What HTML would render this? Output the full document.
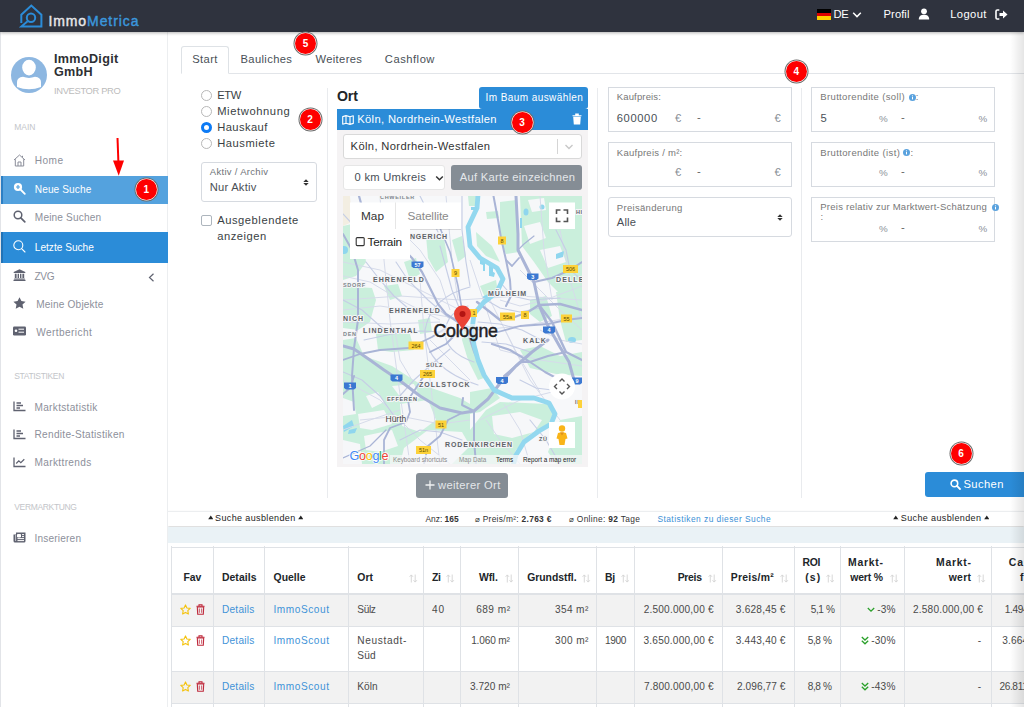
<!DOCTYPE html>
<html lang="de">
<head>
<meta charset="utf-8">
<title>ImmoMetrica</title>
<style>
*{box-sizing:border-box;margin:0;padding:0}
html,body{width:1024px;height:707px;overflow:hidden;background:#fff}
body{font-family:"Liberation Sans",sans-serif;color:#212529;font-size:12px;position:relative}
.abs{position:absolute}
.t{position:absolute;white-space:nowrap;line-height:1}
#nav{position:absolute;left:0;top:0;width:1024px;height:32px;background:#2f333e;box-shadow:0 1px 3px rgba(0,0,0,.3);z-index:5}
#side{position:absolute;left:0;top:0;width:168px;height:707px;background:#fff;border-left:1px solid #e2e4e8;border-right:1px solid #eceef0;z-index:3}
#pg{position:absolute;left:0;top:0;width:1024px;height:707px;z-index:2;overflow:hidden}
.vdiv{position:absolute;width:1px;background:#e9ebee}
.box{position:absolute;border:1px solid #d6dae0;background:#fff}
.radio{position:absolute;width:11px;height:11px;border-radius:50%;border:1px solid #b8b8b8;background:#fff}
.btn{position:absolute;border-radius:3px}
.ann{position:absolute;width:21px;height:21px;border-radius:50%;background:#fe0000;box-shadow:0 0 0 .5px #fff,0 0 0 1.5px #6a6a6a;color:#fff;font-weight:bold;font-size:10px;text-align:center;line-height:22.5px;z-index:20}
</style>
</head>
<body>
<div id="nav">
<svg class="abs" style="left:19px;top:4px" width="25" height="25" viewBox="0 0 25 25"><path d="M2.3 19 V10.8 L12.3 1.6 L22.4 10.8 V22.6 H2.3 L8.6 17.3" fill="none" stroke="#2b8cd8" stroke-width="2" stroke-linejoin="miter"/><circle cx="12" cy="13.8" r="4.2" fill="#2f333e" stroke="#2b8cd8" stroke-width="2"/></svg>
<div class="t" style="left:48.4px;top:14px;font-size:14px;color:#fff;letter-spacing:0.92px;-webkit-text-stroke:.4px"><span style="color:#e8e8ea">Immo</span><span style="color:#3b97dc">Metrica</span></div>
<div class="abs" style="left:817px;top:9px;width:14px;height:11px;background:linear-gradient(#000 0 33%,#d00 33% 66%,#ffce00 66%)"></div>
<div class="t" style="left:833.6px;top:9px;font-size:11.2px;color:#fff;letter-spacing:-0.35px;">DE</div>
<svg class="abs" style="left:852px;top:11px" width="10" height="8" viewBox="0 0 10 8"><path d="M1.2 1.8 L5 5.6 L8.8 1.8" fill="none" stroke="#fff" stroke-width="1.5"/></svg>
<div class="t" style="left:883.6px;top:9px;font-size:11.2px;color:#fff;letter-spacing:0.06px;">Profil</div>
<svg class="abs" style="left:918px;top:8px" width="12" height="13" viewBox="0 0 12 13"><circle cx="6" cy="3.3" r="2.9" fill="#fff"/><path d="M0.8 11.5 C0.8 8 3 6.8 6 6.8 S11.2 8 11.2 11.5 Z" fill="#fff"/></svg>
<div class="t" style="left:950.2px;top:9px;font-size:11.2px;color:#fff;letter-spacing:0.41px;">Logout</div>
<svg class="abs" style="left:995px;top:9px" width="13" height="11" viewBox="0 0 13 11"><path d="M4.3 1 H2.3 Q1 1 1 2.3 V8.7 Q1 10 2.3 10 H4.3" fill="none" stroke="#fff" stroke-width="1.6"/><path d="M4.5 4 H8 V1.4 L12.5 5.5 L8 9.6 V7 H4.5 Z" fill="#fff"/></svg>
</div>
<div id="side">
<div class="abs" style="left:-1px;top:0;width:168px;height:707px">
<svg class="abs" style="left:11px;top:57px" width="36" height="36" viewBox="0 0 36 36"><defs><clipPath id="av"><circle cx="18" cy="18" r="18"/></clipPath></defs><circle cx="18" cy="18" r="18" fill="#8db7e1"/><g clip-path="url(#av)" fill="#fff"><ellipse cx="18" cy="10.6" rx="6.8" ry="7.8"/><path d="M6 30 V25 Q6 20.5 12 19.8 Q18 22 24 19.8 Q30 20.5 30 25 V30 Q18 34.5 6 30 Z"/></g></svg>
<div class="t" style="left:54px;top:53px;font-size:12.6px;color:#2d2f33;letter-spacing:0.33px;font-weight:bold;">ImmoDigit</div>
<div class="t" style="left:54px;top:66px;font-size:12.6px;color:#2d2f33;letter-spacing:0.24px;font-weight:bold;">GmbH</div>
<div class="t" style="left:54px;top:86px;font-size:9.4px;color:#bcbcbc;letter-spacing:-0.35px;">INVESTOR PRO</div>
<div class="t" style="left:14.3px;top:123px;font-size:8.5px;color:#c3c5c9;letter-spacing:-0.05px;">MAIN</div>
<div class="abs" style="left:1px;top:176px;width:166.5px;height:27.5px;background:#54a2de;border-left:2px solid #2c7fc4"></div>
<div class="abs" style="left:1px;top:232px;width:166.5px;height:30.5px;background:#2b8cd8;border-left:2px solid #2273b6"></div>
<div class="t" style="left:34.8px;top:156px;font-size:10.1px;color:#8d909b;letter-spacing:0.46px;">Home</div>
<div class="t" style="left:34.8px;top:185px;font-size:10.1px;color:#fff;letter-spacing:0.1px;">Neue Suche</div>
<div class="t" style="left:34.8px;top:213px;font-size:10.1px;color:#8d909b;letter-spacing:0.17px;">Meine Suchen</div>
<div class="t" style="left:34.8px;top:243px;font-size:10.1px;color:#fff;letter-spacing:0.01px;">Letzte Suche</div>
<div class="t" style="left:34.5px;top:272px;font-size:10.1px;color:#8d909b;letter-spacing:-0.35px;">ZVG</div>
<div class="t" style="left:36.2px;top:300px;font-size:10.1px;color:#8d909b;letter-spacing:0.18px;">Meine Objekte</div>
<div class="t" style="left:36.2px;top:328px;font-size:10.1px;color:#8d909b;letter-spacing:0.42px;">Wertbericht</div>
<div class="t" style="left:34.5px;top:403px;font-size:10.1px;color:#8d909b;letter-spacing:0.3px;">Marktstatistik</div>
<div class="t" style="left:34.5px;top:430px;font-size:10.1px;color:#8d909b;letter-spacing:0.29px;">Rendite-Statistiken</div>
<div class="t" style="left:34.5px;top:458px;font-size:10.1px;color:#8d909b;letter-spacing:0.35px;">Markttrends</div>
<div class="t" style="left:34.5px;top:534px;font-size:10.1px;color:#8d909b;letter-spacing:0.18px;">Inserieren</div>
<div class="t" style="left:14.3px;top:372px;font-size:8.5px;color:#c3c5c9;letter-spacing:-0.35px;">STATISTIKEN</div>
<div class="t" style="left:14.3px;top:503px;font-size:8.5px;color:#c3c5c9;letter-spacing:-0.35px;">VERMARKTUNG</div>
<svg class="abs" style="left:13px;top:154px" width="13" height="13" viewBox="0 0 13 13"><path d="M1 6 L6.5 1 L12 6 M2.3 5.2 V12 H10.7 V5.2 M5 12 V8 H8 V12 M9.5 1.8 V3.4" fill="none" stroke="#8a8d99" stroke-width="1"/></svg>
<svg class="abs" style="left:13px;top:182px" width="13" height="13" viewBox="0 0 13 13"><circle cx="5" cy="5" r="4.1" fill="#fff"/><path d="M8 8 L11.8 11.8" stroke="#fff" stroke-width="1.8" stroke-linecap="round"/><path d="M5 3 V7 M3 5 H7" stroke="#54a2de" stroke-width="1.2"/></svg>
<svg class="abs" style="left:13px;top:209.5px" width="13" height="13" viewBox="0 0 13 13"><circle cx="5" cy="5" r="3.8" fill="none" stroke="#5f6270" stroke-width="1.5"/><path d="M7.8 7.8 L11.8 11.8" stroke="#5f6270" stroke-width="1.7" stroke-linecap="round"/></svg>
<svg class="abs" style="left:13px;top:240px" width="13" height="13" viewBox="0 0 13 13"><circle cx="5.3" cy="5.3" r="4.5" fill="none" stroke="#fff" stroke-width="1.1"/><path d="M8.6 8.6 L12 12" stroke="#fff" stroke-width="1.1" stroke-linecap="round"/></svg>
<svg class="abs" style="left:13px;top:269.3px" width="13" height="12" viewBox="0 0 13 12"><path d="M6.5 0.3 L12.3 3 V4 H0.7 V3 Z M1.8 4.8 H3.6 V9 H1.8 Z M4.6 4.8 H6 V9 H4.6 Z M7 4.8 H8.4 V9 H7 Z M9.4 4.8 H11.2 V9 H9.4 Z M1.2 9.4 H11.8 V10.4 H1.2 Z M0.5 10.8 H12.5 V12 H0.5 Z" fill="#5f6270"/></svg>
<svg class="abs" style="left:147.5px;top:272.5px" width="7" height="9" viewBox="0 0 7 9"><path d="M5.5 0.8 L1.5 4.5 L5.5 8.2" fill="none" stroke="#5f6270" stroke-width="1.2"/></svg>
<svg class="abs" style="left:13px;top:296.5px" width="13" height="12" viewBox="0 0 13 12"><path d="M6.5 0.3 L8.4 4.1 L12.6 4.7 L9.5 7.6 L10.3 11.8 L6.5 9.8 L2.7 11.8 L3.5 7.6 L0.4 4.7 L4.6 4.1 Z" fill="#5f6270"/></svg>
<svg class="abs" style="left:13px;top:325.5px" width="13" height="10" viewBox="0 0 13 10"><rect x="0" y="0.5" width="13" height="9" rx="1.2" fill="#5f6270"/><path d="M5.5 3.2 H11 M5.5 6.2 H11" stroke="#fff" stroke-width="1"/><circle cx="3" cy="4.8" r="1.3" fill="#fff"/></svg>
<svg class="abs" style="left:13px;top:401px" width="13" height="11" viewBox="0 0 13 11"><path d="M1 0.5 V9.5 H12.5" fill="none" stroke="#5f6270" stroke-width="1.3"/><path d="M3.5 2 H8 M3.5 4.5 H10 M3.5 7 H7" stroke="#5f6270" stroke-width="1.4"/></svg>
<svg class="abs" style="left:13px;top:429px" width="13" height="11" viewBox="0 0 13 11"><path d="M1 0.5 V9.5 H12.5" fill="none" stroke="#5f6270" stroke-width="1.3"/><path d="M3.5 2 H8 M3.5 4.5 H10 M3.5 7 H7" stroke="#5f6270" stroke-width="1.4"/></svg>
<svg class="abs" style="left:13px;top:457px" width="13" height="11" viewBox="0 0 13 11"><path d="M1 0.5 V9.5 H12.5" fill="none" stroke="#5f6270" stroke-width="1.3"/><path d="M3.2 6.5 L5.8 3.8 L7.8 5.6 L11.3 2.2" fill="none" stroke="#5f6270" stroke-width="1.2"/></svg>
<svg class="abs" style="left:13px;top:531.5px" width="13" height="11" viewBox="0 0 13 11"><path d="M3 0.5 H12.5 V9 Q12.5 10.5 11 10.5 H2 Q0.5 10.5 0.5 9 V2.5 H3 Z" fill="#5f6270"/><path d="M4.5 2.5 H7.5 V5 H4.5 Z M9 2.6 H11 M9 4.6 H11 M4.5 6.6 H11 M4.5 8.6 H11" stroke="#fff" stroke-width="1" fill="#fff"/><path d="M2.6 3 V9" stroke="#fff" stroke-width=".6"/></svg>
</div>
</div>
<div id="pg">
<div class="abs" style="left:181px;top:73px;width:843px;height:1px;background:#e2e5e9"></div>
<div class="abs" style="left:181px;top:46px;width:48px;height:28px;border:1px solid #dee2e6;border-bottom:1px solid #fff;border-radius:3px 3px 0 0;background:#fff"></div>
<div class="t" style="left:192.2px;top:54px;font-size:11.2px;color:#495057;letter-spacing:0.41px;">Start</div>
<div class="t" style="left:240.5px;top:54px;font-size:11.2px;color:#495057;letter-spacing:0.36px;">Bauliches</div>
<div class="t" style="left:315.5px;top:54px;font-size:11.2px;color:#495057;letter-spacing:0.35px;">Weiteres</div>
<div class="t" style="left:384.8px;top:54px;font-size:11.2px;color:#495057;letter-spacing:0.52px;">Cashflow</div>
<div class="radio" style="left:201px;top:89.9px"></div>
<div class="t" style="left:217.2px;top:90px;font-size:11.2px;color:#3a3f44;letter-spacing:-0.35px;">ETW</div>
<div class="radio" style="left:201px;top:105.9px"></div>
<div class="t" style="left:217.2px;top:106px;font-size:11.2px;color:#3a3f44;letter-spacing:0.6px;">Mietwohnung</div>
<div class="radio" style="left:201px;top:122.1px;border:3.5px solid #0d7bf5"></div>
<div class="t" style="left:217.2px;top:122px;font-size:11.2px;color:#3a3f44;letter-spacing:0.41px;">Hauskauf</div>
<div class="radio" style="left:201px;top:138.1px"></div>
<div class="t" style="left:217.2px;top:138px;font-size:11.2px;color:#3a3f44;letter-spacing:0.54px;">Hausmiete</div>
<div class="box" style="left:201px;top:162px;width:116px;height:39.5px;border-radius:3px"></div>
<div class="t" style="left:209.8px;top:167px;font-size:9.5px;color:#6f7378;letter-spacing:0.3px;">Aktiv / Archiv</div>
<div class="t" style="left:209.8px;top:182px;font-size:11.2px;color:#4a4f55;letter-spacing:0.21px;">Nur Aktiv</div>
<svg class="abs" style="left:302.5px;top:179px" width="6" height="7" viewBox="0 0 6 7"><path d="M0.3 3 L3 0.2 L5.7 3 Z M0.3 4 L3 6.8 L5.7 4 Z" fill="#333"/></svg>
<div class="abs" style="left:201px;top:215px;width:11px;height:11px;border:1px solid #adb5bd;border-radius:2px;background:#fff"></div>
<div class="t" style="left:217.2px;top:215px;font-size:11.2px;color:#3a3f44;letter-spacing:0.54px;">Ausgeblendete</div>
<div class="t" style="left:217.2px;top:231px;font-size:11.2px;color:#3a3f44;letter-spacing:0.5px;">anzeigen</div>
<div class="vdiv" style="left:327px;top:88px;height:410px"></div>
<div class="t" style="left:336.9px;top:89px;font-size:14.1px;color:#212529;letter-spacing:-0.01px;font-weight:bold;">Ort</div>
<div class="btn" style="left:479px;top:87px;width:108.5px;height:21.5px;background:#2b8cd8"></div>
<div class="t" style="left:485.6px;top:93px;font-size:10px;color:#fff;letter-spacing:0.42px;">Im Baum auswählen</div>
<div class="abs" style="left:337px;top:109px;width:250.5px;height:21px;background:#2b8cd8"></div>
<svg class="abs" style="left:342px;top:114.5px" width="12" height="10" viewBox="0 0 12 10"><path d="M0.7 1.6 L4 0.6 L8 1.8 L11.3 0.8 V8.4 L8 9.4 L4 8.2 L0.7 9.2 Z M4 0.6 V8.2 M8 1.8 V9.4" fill="none" stroke="#fff" stroke-width="1.1" stroke-linejoin="round"/></svg>
<div class="t" style="left:357.2px;top:114px;font-size:11.2px;color:#fff;letter-spacing:0.35px;">Köln, Nordrhein-Westfalen</div>
<svg class="abs" style="left:572px;top:113px" width="10" height="12" viewBox="0 0 10 12"><path d="M0.5 2.2 H9.5 V3.2 H0.5 Z M3.2 0.5 H6.8 V2.2 H3.2 Z M1.2 3.8 H8.8 L8.2 11.5 H1.8 Z" fill="#fff"/></svg>
<div class="abs" style="left:337px;top:130px;width:250.5px;height:337px;background:#f5f3f4"></div>
<div class="box" style="left:343px;top:134px;width:239px;height:25px;border-radius:3px;border-color:#d9d9d9"></div>
<div class="t" style="left:350.6px;top:141px;font-size:11.2px;color:#333;letter-spacing:0.35px;">Köln, Nordrhein-Westfalen</div>
<div class="abs" style="left:556.5px;top:139px;width:1px;height:15px;background:#d5d5d5"></div>
<svg class="abs" style="left:564px;top:143px" width="10" height="8" viewBox="0 0 10 8"><path d="M1.5 2 L5 5.5 L8.5 2" fill="none" stroke="#c8c8c8" stroke-width="1.4"/></svg>
<div class="box" style="left:343px;top:165px;width:102px;height:25px;border-radius:3px;border-color:#e6e6e6"></div>
<div class="t" style="left:354.5px;top:172px;font-size:11.2px;color:#495057;letter-spacing:0.28px;">0 km Umkreis</div>
<svg class="abs" style="left:434.5px;top:174.5px" width="9" height="7" viewBox="0 0 9 7"><path d="M1.2 1.5 L4.5 4.8 L7.8 1.5" fill="none" stroke="#333" stroke-width="1.5"/></svg>
<div class="btn" style="left:450.7px;top:165px;width:131.3px;height:25px;background:#858d95"></div>
<div class="t" style="left:459.7px;top:172px;font-size:11.2px;color:#e4e7ea;letter-spacing:0.29px;">Auf Karte einzeichnen</div>
<svg id="mapsvg" class="abs" style="left:343px;top:196px" width="239" height="268" viewBox="343 196 239 268" font-family="Liberation Sans, sans-serif">
<rect x="343" y="196" width="239" height="268" fill="#f7f8fa"/>
<!-- green areas -->
<g fill="#caefdc">
<path d="M343 226 L352 224 L362 232 L366 262 L356 276 L343 280 Z"/>
<path d="M343 286 L372 288 L376 300 L370 322 L358 330 L343 328 Z"/>
<path d="M384 286 L398 284 L402 296 L390 300 Z"/>
<path d="M372 238 L392 230 L398 250 L380 256 Z"/>
<path d="M404 262 L416 258 L420 274 L410 280 Z"/>
<path d="M426 236 L444 238 L448 262 L436 272 L428 258 Z"/>
<path d="M452 240 L462 236 L466 256 L458 262 Z"/>
<path d="M468 196 L476 196 L476 206 L469 206 Z"/>
<path d="M486 212 L498 211 L499 218 L487 219 Z"/>
<path d="M500 202 L517 200 L519 252 L506 254 L500 240 Z"/>
<path d="M520 196 L582 196 L582 296 L566 300 L548 282 L534 262 L522 246 Z"/>
<path d="M476 232 L492 246 L500 262 L486 256 L477 246 Z"/>
<path d="M480 286 L496 280 L498 292 L486 300 Z"/>
<path d="M418 320 L430 318 L432 332 L420 334 Z"/>
<path d="M376 334 L410 334 L414 350 L392 352 L378 350 Z"/>
<path d="M343 340 L356 338 L364 356 L392 366 L420 384 L460 398 L470 404 L470 464 L343 464 Z"/>
<path d="M470 392 L492 388 L500 398 L480 412 L470 414 Z"/>
<path d="M500 402 L548 404 L553 414 L548 424 L530 434 L516 450 L510 464 L470 464 L470 430 L486 410 Z"/>
<path d="M520 350 L540 346 L560 356 L582 352 L582 376 L556 374 L530 368 Z"/>
<path d="M530 300 L546 296 L552 316 L540 322 L530 314 Z"/>
<path d="M556 292 L582 290 L582 340 L566 342 L560 320 Z"/>
<path d="M560 420 L582 416 L582 464 L556 464 L548 452 Z"/>
<path d="M464 326 L470 340 L476 360 L484 378 L478 380 L468 360 L462 340 Z"/>
</g>
<!-- white clearings inside green -->
<g fill="#f6f7f9">
<path d="M366 396 L378 392 L384 402 L372 408 Z"/>
<path d="M358 414 L384 410 L392 424 L372 430 L360 428 Z"/>
<path d="M364 436 L392 430 L398 446 L380 452 L366 450 Z"/>
<path d="M392 386 L414 384 L420 398 L404 402 Z"/>
<path d="M400 404 L428 400 L436 420 L420 432 L402 426 Z"/>
<path d="M343 398 L354 402 L356 414 L343 416 Z"/>
<path d="M343 440 L360 444 L362 464 L343 464 Z"/>
<path d="M428 430 L462 432 L470 446 L452 464 L400 464 L404 448 Z"/>
<path d="M492 416 L520 412 L542 420 L534 432 L512 438 L494 434 Z"/>
<path d="M524 226 L540 222 L546 238 L530 244 Z"/>
<path d="M540 250 L560 246 L566 262 L548 268 Z"/>
<path d="M528 200 L544 198 L546 210 L532 212 Z"/>
</g>
<path d="M343 196 L350 196 L352 222 L343 226 Z" fill="#f3eee2"/>
<!-- small lakes -->
<g fill="#8fd6ee">
<ellipse cx="344" cy="250" rx="4" ry="4"/>
<ellipse cx="526" cy="212" rx="2.5" ry="3.5"/>
<ellipse cx="542" cy="207" rx="2.5" ry="2.5"/>
<path d="M556 254 L564 251 L563 257 L556 259 Z"/>
<ellipse cx="572" cy="340" rx="4" ry="3"/>
<path d="M343 426 L352 420 L354 426 L344 432 Z"/>
<path d="M349 430 L357 428 L355 433 L348 434 Z"/>
<path d="M482 297 L496 290 L497 294 L486 303 Z"/>
<path d="M489 266 L493 266 L493 276 L489 276 Z"/>
<path d="M520 218 L522 218 L522 228 L520 228 Z"/>
</g>
<!-- minor roads -->
<g fill="none" stroke="#d6dbea" stroke-width="1">
<path d="M343 276 L370 282 L400 300 L440 320"/>
<path d="M400 230 L420 250 L440 280 L450 310"/>
<path d="M470 260 L480 290 L490 320 L500 350"/>
<path d="M343 310 L380 306 L420 312 L455 318"/>
<path d="M520 270 L540 290 L560 310 L582 330"/>
<path d="M500 300 L520 306 L545 300 L582 286"/>
<path d="M430 340 L450 360 L470 380"/>
<path d="M395 330 L400 360 L412 380"/>
<path d="M505 330 L515 350 L528 372 L540 392"/>
<path d="M343 430 L370 420 L400 410"/>
<path d="M540 330 L560 340 L582 344"/>
<path d="M343 300 L400 296 L460 300 L520 296 L582 300"/>
<path d="M343 322 L390 324 L440 322"/>
<path d="M380 196 L384 260 L390 320 L398 380 L410 464"/>
<path d="M420 280 L424 330 L430 380 L440 464"/>
<path d="M446 196 L452 260 L458 300"/>
<path d="M490 300 L510 340 L530 380 L560 420"/>
<path d="M480 330 L520 326 L582 316"/>
<path d="M500 350 L540 360 L582 366"/>
<path d="M343 380 L380 400 L420 440 L450 464"/>
<path d="M480 420 L520 400 L560 390"/>
<path d="M540 196 L544 250 L552 300"/>
<path d="M560 230 L570 280 L582 320"/>
<path d="M343 262 L380 270 L420 290 L460 310"/>
<path d="M360 420 L400 416 L440 424 L470 420"/>
<path d="M486 420 L500 440 L520 464"/>
<path d="M504 404 L520 430 L530 464"/>
</g>
<g fill="none" stroke="#c6cee5" stroke-width="1.15" stroke-linecap="round">
<path d="M468 306 Q447 312 445 332 Q445 352 474 362"/>
<path d="M470 287 Q431 297 425 330 Q425 368 478 385"/>
<path d="M445 332 L420 331 L392 334 L364 340"/>
<path d="M449 318 L428 300 L408 280 L396 262"/>
<path d="M450 349 L432 364 L414 380 L398 398"/>
<path d="M460 310 L452 290 L446 268 L440 246"/>
<path d="M478 322 L500 324 L522 330 L545 342"/>
<path d="M482 342 L506 344 L530 352"/>
<path d="M486 300 L500 308 L520 312 L540 308"/>
<path d="M500 282 L512 296 L530 300 L560 298"/>
<path d="M343 300 L362 310 L380 326 L392 334"/>
<path d="M366 262 L380 280 L394 296 L410 310"/>
<path d="M343 372 L362 380 L380 396 L394 416"/>
<path d="M400 440 L420 430 L440 432 L462 440"/>
<path d="M520 380 L536 388 L552 390 L570 384"/>
<path d="M530 420 L546 440 L560 464"/>
<path d="M556 230 L566 250 L570 270 L582 280"/>
<path d="M343 214 L356 228 L372 236 L392 238"/>
<path d="M420 196 L430 216 L438 232"/>
<path d="M462 196 L462 230 L466 262 L470 286"/>
</g>
<!-- major roads -->
<g fill="none" stroke="#a9b4d6" stroke-width="2" stroke-linecap="round" stroke-linejoin="round">
<path d="M359 196 L364 214 L378 232 L400 246 L412 258 L422 272 L430 288 L438 304 L446 314 L458 322" stroke-width="2.2"/>
<path d="M440 228 L450 252 L458 286 L462 310" stroke-width="1.6"/>
<path d="M343 234 L352 250 L358 270 L358 320 L354 348 L352 376 L354 410" stroke-width="2"/>
<path d="M343 346 L354 349 L370 360 L384 370 L399 380 L420 396 L440 408 L462 413 L474 411 L488 399 L501 382 L516 366 L532 352 L548 340" stroke-width="3"/>
<path d="M343 394 L350 388 L354 376" stroke-width="2"/>
<path d="M343 360 L360 354 L380 350 L409 348 L432 337 L446 328" stroke-width="1.8"/>
<path d="M493.5 196 L498 220 L501 238 L506 260 L510 280 L511 296 L506 306" stroke-width="2"/>
<path d="M516 196 L518 234 L518 250 L526 266 L534 282 L539 305 L547 324 L560 347 L569 362 L574 380" stroke-width="3"/>
<path d="M506 260 L512 266 L519 258" stroke-width="1.8"/>
<path d="M518 250 L524 244 L534 236" stroke-width="1.2"/>
<path d="M477 302 L490 312 L500 320 L512 318 L528 312 L539 305 L560 304 L582 310" stroke-width="2.4"/>
<path d="M534 282 L552 278 L570 270 L582 262" stroke-width="2"/>
<path d="M498 332 L520 326 L548 324 L566 320 L582 318" stroke-width="1.8"/>
<path d="M539 305 L552 322 L566 352 L582 360" stroke-width="2.4"/>
<path d="M492 344 L510 350 L530 362 L548 356 L566 352" stroke-width="2.2"/>
<path d="M504 376 L520 362 L530 362 L545 372 L560 380" stroke-width="2"/>
<path d="M458 322 L468 334 L474 352 L480 366" stroke-width="1.8"/>
<path d="M430 352 L446 344 L458 332 L466 326 L480 330" stroke-width="1.8"/>
<path d="M474 411 L474 440 L476 464" stroke-width="2"/>
<path d="M474 411 L462 405 L463 398" stroke-width="2"/>
<path d="M384 464 L384 440 L390 428 L406 422 L410 412 L408 400 L416 388 L424 376" stroke-width="1.8"/>
<path d="M462 413 L448 420 L440 436 L428 446 L424 464" stroke-width="1.8"/>
<path d="M343 458 L370 446 L386 430" stroke-width="1.2"/>
</g>
<!-- river -->
<path d="M478 195 L477 208 L468 227 L470 246 L480 258 L497 268 L503 279 L497 292 L484 302 L474 314 L472 330 L474 345 L478 360 L484 375 L494 390 L512 398 L534 398 L549 403 L555 414 L551 424 L539 431 L524 442 L516 455 L513 466" fill="none" stroke="#93d8ef" stroke-width="4.8" stroke-linejoin="round" stroke-linecap="round"/>
<path d="M471 207 L477 207 L477 210 L471 210 Z M480 260 L485 263 L485 271 L483 271 L483 265 L480 264 Z M490 270 L495 273 L494 277 L490 276 Z" fill="#8fd6ee"/>
<!-- labels -->
<g font-size="7" font-weight="bold" fill="#5f6368" letter-spacing="1" stroke="#f4f5f7" stroke-width="2" paint-order="stroke" stroke-linejoin="round">
<text x="410" y="238.5" letter-spacing=".8">NGERICH</text>
<text x="373" y="282">EHRENFELD</text>
<text x="389" y="312.5">EHRENFELD</text>
<text x="343" y="321">NICH</text>
<text x="363" y="333" letter-spacing="1.1">LINDENTHAL</text>
<text x="488" y="295.5" letter-spacing=".9">MÜLHEIM</text>
<text x="523" y="343" letter-spacing="1.1">KALK</text>
<text x="556" y="282" letter-spacing="1.1">DELLB</text>
<text x="419" y="387" letter-spacing="1">ZOLLSTOCK</text>
<text x="445" y="447" letter-spacing=".9">RODENKIRCHEN</text>
<text x="343" y="286.5" font-size="5.5" fill="#80868b" letter-spacing=".7">SDORF</text>
<text x="343" y="336" font-size="5.5" fill="#80868b" letter-spacing=".7">DEN</text>
<text x="426" y="367" font-size="5.5" letter-spacing=".7">SÜLZ</text>
<text x="387" y="400.5" font-size="5.5" letter-spacing=".7">EFFEREN</text>
<text x="539" y="441" font-size="5.5" letter-spacing=".7">ZÜ</text>
<text x="575" y="404" font-size="5.5" letter-spacing=".7">IL</text>
<text x="576" y="214" font-size="5.5" letter-spacing=".5">HI</text>
<text x="380" y="199" font-size="5.5" fill="#80868b" letter-spacing=".7">CHWEILER</text>
</g>
<text x="385.5" y="422" font-size="8.5" fill="#444" stroke="#f4f5f7" stroke-width="2" paint-order="stroke">Hürth</text>
<rect x="434" y="324" width="63" height="14" rx="5" fill="#f7f8fa" opacity=".6"/><text x="433.5" y="337" font-size="17.8" fill="#202124" stroke="#202124" stroke-width=".450" letter-spacing="-.3">Cologne</text>
<!-- shields -->
<g font-size="5.5" text-anchor="middle" fill="#5a4a00">
<rect x="498" y="236.5" width="8" height="8" fill="#fdd23a"/><text x="502" y="242.7">8</text>
<rect x="451.5" y="269" width="8" height="8" fill="#fdd23a"/><text x="455.5" y="275.2">9</text>
<rect x="563" y="265" width="15" height="8" fill="#fdd23a"/><text x="570.5" y="271.2">506</text>
<rect x="500" y="312.5" width="15" height="8" fill="#fdd23a"/><text x="507.5" y="318.7">55a</text>
<rect x="521" y="311" width="8" height="8" fill="#fdd23a"/><text x="525" y="317.2">8</text>
<rect x="561" y="314.5" width="11" height="8" fill="#fdd23a"/><text x="566.5" y="320.7">55</text>
<rect x="469" y="309" width="8" height="8" fill="#fdd23a"/><text x="474" y="315.2">1</text>
<rect x="408.5" y="341.5" width="15" height="8" fill="#fdd23a"/><text x="416" y="347.7">264</text>
<rect x="420" y="370" width="15" height="8" fill="#fdd23a"/><text x="427.5" y="376.2">265</text>
<rect x="435.5" y="420.5" width="11" height="8" fill="#fdd23a"/><text x="441" y="426.7">51</text>
<rect x="416" y="446" width="15" height="8" fill="#fdd23a"/><text x="423.5" y="452.2">51n</text>
<rect x="578" y="400" width="6" height="8" fill="#fdd23a"/>
</g>
<g font-size="5.5" text-anchor="middle" fill="#fff" font-weight="bold">
<path d="M411.5 261.5 H423.5 V266.5 L421.5 268 H413.5 L411.5 266.5 Z" fill="#3b78d1"/><text x="417.5" y="266.8">57</text>
<path d="M527 273.5 H538.5 V278.5 L536.5 280 H529 L527 278.5 Z" fill="#3b78d1"/><text x="532.7" y="278.8">3</text>
<path d="M543 326.5 H555 V332 L553 333.5 H545 L543 332 Z" fill="#3b78d1"/><text x="549" y="332">4</text>
<path d="M390.5 374.5 H402.5 V380 L400.5 381.5 H392.5 L390.5 380 Z" fill="#3b78d1"/><text x="396.5" y="380">4</text>
<path d="M344 382.5 H356 V388 L354 389.5 H346 L344 388 Z" fill="#3b78d1"/><text x="350" y="388">1</text>
<path d="M496 377 H508 V382.5 L506 384 H498 L496 382.5 Z" fill="#3b78d1"/><text x="502" y="382.5">4</text>
<path d="M572 377.5 H582 V383 L580 384.5 H574 L572 383 Z" fill="#3b78d1"/><text x="577" y="383">9</text>
</g>
<!-- pin -->
<path d="M462.5 330.5 C460.5 324 454 320.5 454 314 A8.5 8.5 0 0 1 471 314 C471 320.5 464.5 324 462.5 330.5 Z" fill="#ea4335"/>
<circle cx="462.5" cy="314" r="3" fill="#b31412"/>
<!-- bottom attribution -->
<rect x="390" y="455" width="192" height="9" fill="#f6f7f8" opacity=".75"/>
<g font-size="6.3">
<text x="393" y="461.7" fill="#8a8a8a">Keyboard shortcuts</text>
<text x="459" y="461.7" fill="#8a8a8a">Map Data</text>
<text x="496" y="461.7" fill="#222">Terms</text>
<text x="523" y="461.7" fill="#222">Report a map error</text>
</g>
<defs><linearGradient id="gg" gradientUnits="userSpaceOnUse" x1="349.5" y1="0" x2="388.3" y2="0"><stop offset="0%" stop-color="#4285f4"/><stop offset="24.5%" stop-color="#4285f4"/><stop offset="24.5%" stop-color="#ea4335"/><stop offset="41.8%" stop-color="#ea4335"/><stop offset="41.8%" stop-color="#fbbc05"/><stop offset="59%" stop-color="#fbbc05"/><stop offset="59%" stop-color="#4285f4"/><stop offset="76.3%" stop-color="#4285f4"/><stop offset="76.3%" stop-color="#34a853"/><stop offset="82.7%" stop-color="#34a853"/><stop offset="82.7%" stop-color="#ea4335"/><stop offset="100%" stop-color="#ea4335"/></linearGradient></defs><text x="349.5" y="459.5" font-size="12.6" letter-spacing="-.3" fill="url(#gg)" stroke="#fff" stroke-width="1.5" paint-order="stroke">Google</text>
<!-- controls -->
<g>
<rect x="350" y="203.5" width="111" height="26.5" fill="#000" opacity=".12"/><rect x="350" y="202.5" width="111" height="26.5" fill="#fff"/>
<rect x="395" y="202.5" width="1" height="26.5" fill="#e6e6e6"/>
<rect x="350" y="229" width="60" height="30" fill="#fff"/>
<text x="361" y="220" font-size="11.8" fill="#333">Map</text>
<text x="407.5" y="220" font-size="11.8" fill="#8a8a8a" letter-spacing="-.1">Satellite</text>
<rect x="356.2" y="237.6" width="8" height="8" rx="1" fill="#fff" stroke="#333" stroke-width="1.1"/>
<text x="367.5" y="245.7" font-size="11.8" fill="#222" letter-spacing="-.25">Terrain</text>
<rect x="549" y="202.5" width="26" height="26.5" fill="#fff"/>
<path d="M556.5 214 V210 H560.5 M563.5 210 H567.5 V214 M567.5 217.5 V221.5 H563.5 M560.5 221.5 H556.5 V217.5" fill="none" stroke="#555" stroke-width="1.6"/>
<circle cx="562" cy="386.5" r="13" fill="#fff"/>
<path d="M559.5 381.5 L562 379 L564.5 381.5 M559.5 391.5 L562 394 L564.5 391.5 M557 384 L554.5 386.5 L557 389 M567 384 L569.5 386.5 L567 389" fill="none" stroke="#555" stroke-width="1.4"/>
<rect x="549" y="422" width="26" height="26" fill="#fff"/>
<circle cx="562" cy="428.5" r="3.2" fill="#f9b418"/>
<path d="M558 433 Q562 431.5 566 433 L567.5 438.5 L565.5 439 L564.5 445 H559.5 L558.5 439 L556.5 438.5 Z" fill="#f9b418"/>
<path d="M560 432.5 L562 435.5 L564 432.5 Z" fill="#e0901a"/>
</g>
</svg>

<div class="btn" style="left:416.2px;top:472.6px;width:92px;height:25.2px;background:#858d95"></div>
<svg class="abs" style="left:425px;top:480px" width="10" height="10" viewBox="0 0 10 10"><path d="M5 0.5 V9.5 M0.5 5 H9.5" stroke="#f0f1f2" stroke-width="1.3"/></svg>
<div class="t" style="left:438px;top:480px;font-size:11.2px;color:#e4e7ea;letter-spacing:0.35px;">weiterer Ort</div>
<div class="vdiv" style="left:597px;top:88px;height:410px"></div>
<div class="box" style="left:608px;top:87px;width:184px;height:45px"></div>
<div class="t" style="left:616.8px;top:92px;font-size:9.5px;color:#777;letter-spacing:0.14px;">Kaufpreis:</div>
<div class="t" style="left:616.8px;top:113px;font-size:11.2px;color:#495057;letter-spacing:0.6px;">600000</div>
<div class="box" style="left:608px;top:142px;width:184px;height:45px"></div>
<div class="t" style="left:616.8px;top:148px;font-size:9.5px;color:#777;letter-spacing:0.26px;">Kaufpreis / m²:</div>
<div class="t" style="left:675.1px;top:113px;font-size:11.2px;color:#8a9097;">€</div>
<div class="t" style="left:697px;top:112px;font-size:11.2px;color:#666;">-</div>
<div class="t" style="left:774.6px;top:113px;font-size:11.2px;color:#8a9097;">€</div>
<div class="t" style="left:675.1px;top:167px;font-size:11.2px;color:#8a9097;">€</div>
<div class="t" style="left:697px;top:166px;font-size:11.2px;color:#666;">-</div>
<div class="t" style="left:774.6px;top:167px;font-size:11.2px;color:#8a9097;">€</div>
<div class="box" style="left:608px;top:197px;width:184px;height:40px;border-radius:3px"></div>
<div class="t" style="left:616.8px;top:203px;font-size:9.5px;color:#777;letter-spacing:0.31px;">Preisänderung</div>
<div class="t" style="left:616.8px;top:217px;font-size:11.2px;color:#4a4f55;letter-spacing:0.14px;">Alle</div>
<svg class="abs" style="left:776.5px;top:213.5px" width="6" height="7" viewBox="0 0 6 7"><path d="M0.3 3 L3 0.2 L5.7 3 Z M0.3 4 L3 6.8 L5.7 4 Z" fill="#333"/></svg>
<div class="vdiv" style="left:801px;top:88px;height:410px"></div>
<div class="box" style="left:811px;top:87px;width:184px;height:45px"></div>
<div class="t" style="left:820.3px;top:92px;font-size:9.5px;color:#777;letter-spacing:0.35px;">Bruttorendite (soll)</div>
<svg class="abs" style="left:908.5px;top:93.8px" width="7" height="7" viewBox="0 0 7 7"><circle cx="3.5" cy="3.5" r="3.5" fill="#5aa2de"/><path d="M3.5 3 V5.4" stroke="#fff" stroke-width="1"/><circle cx="3.5" cy="1.8" r=".6" fill="#fff"/></svg>
<div class="t" style="left:915.7px;top:92px;font-size:9.5px;color:#777;">:</div>
<div class="t" style="left:820.5px;top:113px;font-size:11.2px;color:#495057;">5</div>
<div class="box" style="left:811px;top:142px;width:184px;height:45px"></div>
<div class="t" style="left:820.3px;top:148px;font-size:9.5px;color:#777;letter-spacing:0.37px;">Bruttorendite (ist)</div>
<svg class="abs" style="left:903.4px;top:148.8px" width="7" height="7" viewBox="0 0 7 7"><circle cx="3.5" cy="3.5" r="3.5" fill="#5aa2de"/><path d="M3.5 3 V5.4" stroke="#fff" stroke-width="1"/><circle cx="3.5" cy="1.8" r=".6" fill="#fff"/></svg>
<div class="t" style="left:910.6px;top:148px;font-size:9.5px;color:#777;">:</div>
<div class="box" style="left:811px;top:197px;width:184px;height:45px"></div>
<div class="t" style="left:820.3px;top:202px;font-size:9.5px;color:#777;letter-spacing:0.24px;">Preis relativ zur Marktwert-Schätzung</div>
<svg class="abs" style="left:992.1px;top:203.9px" width="7" height="7" viewBox="0 0 7 7"><circle cx="3.5" cy="3.5" r="3.5" fill="#5aa2de"/><path d="M3.5 3 V5.4" stroke="#fff" stroke-width="1"/><circle cx="3.5" cy="1.8" r=".6" fill="#fff"/></svg>
<div class="t" style="left:820.6px;top:212px;font-size:9.5px;color:#777;">:</div>
<div class="t" style="left:878.9px;top:114px;font-size:9.8px;color:#8a9097;">%</div>
<div class="t" style="left:901px;top:112px;font-size:11.2px;color:#666;">-</div>
<div class="t" style="left:978.5px;top:114px;font-size:9.8px;color:#8a9097;">%</div>
<div class="t" style="left:878.9px;top:168px;font-size:9.8px;color:#8a9097;">%</div>
<div class="t" style="left:901px;top:166px;font-size:11.2px;color:#666;">-</div>
<div class="t" style="left:978.5px;top:168px;font-size:9.8px;color:#8a9097;">%</div>
<div class="t" style="left:878.9px;top:224px;font-size:9.8px;color:#8a9097;">%</div>
<div class="t" style="left:901px;top:222px;font-size:11.2px;color:#666;">-</div>
<div class="t" style="left:978.5px;top:224px;font-size:9.8px;color:#8a9097;">%</div>
<div class="btn" style="left:924.5px;top:472px;width:110px;height:25.3px;background:#2b8cd8"></div>
<svg class="abs" style="left:950px;top:478.5px" width="11" height="11" viewBox="0 0 11 11"><circle cx="4.4" cy="4.4" r="3.3" fill="none" stroke="#fff" stroke-width="1.6"/><path d="M6.9 6.9 L10 10" stroke="#fff" stroke-width="1.8" stroke-linecap="round"/></svg>
<div class="t" style="left:963.5px;top:479px;font-size:11.2px;color:#fff;letter-spacing:0.39px;">Suchen</div>
<div class="abs" style="left:168px;top:511px;width:856px;height:15px;background:#fff;border-top:1px solid #eceef0;box-shadow:0 1px 2px rgba(0,0,0,.18)"></div>
<div class="abs" style="left:168px;top:527px;width:856px;height:16px;background:#eaf2f6"></div>
<svg class="abs" style="left:207.6px;top:514.5px" width="5.5" height="5" viewBox="0 0 5.5 5"><path d="M0.2 4.3 L2.75 0.5 L5.3 4.3 Z" fill="#222"/></svg>
<div class="t" style="left:215.1px;top:514px;font-size:9px;color:#222;letter-spacing:0.37px;">Suche ausblenden</div>
<svg class="abs" style="left:297.9px;top:514.5px" width="5.5" height="5" viewBox="0 0 5.5 5"><path d="M0.2 4.3 L2.75 0.5 L5.3 4.3 Z" fill="#222"/></svg>
<svg class="abs" style="left:893.3px;top:514.5px" width="5.5" height="5" viewBox="0 0 5.5 5"><path d="M0.2 4.3 L2.75 0.5 L5.3 4.3 Z" fill="#222"/></svg>
<div class="t" style="left:900.8px;top:514px;font-size:9px;color:#222;letter-spacing:0.37px;">Suche ausblenden</div>
<svg class="abs" style="left:983.6px;top:514.5px" width="5.5" height="5" viewBox="0 0 5.5 5"><path d="M0.2 4.3 L2.75 0.5 L5.3 4.3 Z" fill="#222"/></svg>
<div class="t" style="left:425.4px;top:515px;font-size:8.4px;color:#333;letter-spacing:0.02px;">Anz: <b>165</b></div>
<div class="t" style="left:474.7px;top:515px;font-size:8.4px;color:#333;letter-spacing:0.31px;">⌀ Preis/m²: <b>2.763 €</b></div>
<div class="t" style="left:568.8px;top:515px;font-size:8.4px;color:#333;letter-spacing:0.33px;">⌀ Online: <b>92</b> Tage</div>
<div class="t" style="left:657.4px;top:515px;font-size:8.4px;color:#3b8fd6;letter-spacing:0.47px;">Statistiken zu dieser Suche</div>
<div class="abs" style="left:171.5px;top:547px;width:860px;height:170px;background:#fff;border-top:1px solid #dfe2e6"></div>
<div class="abs" style="left:172px;top:594px;width:860px;height:32px;background:#f2f2f2"></div>
<div class="abs" style="left:172px;top:671px;width:860px;height:32px;background:#f2f2f2"></div>
<div class="abs" style="left:172px;top:593.3px;width:860px;height:1.6px;background:#dfe2e6"></div>
<div class="abs" style="left:172px;top:625.7px;width:860px;height:1px;background:#dfe2e6"></div>
<div class="abs" style="left:172px;top:670.5px;width:860px;height:1px;background:#dfe2e6"></div>
<div class="abs" style="left:172px;top:702.5px;width:860px;height:1px;background:#dfe2e6"></div>
<div class="abs" style="left:171px;top:546.3px;width:1px;height:170px;background:#dfe2e6"></div>
<div class="abs" style="left:212.9px;top:546.3px;width:1px;height:170px;background:#dfe2e6"></div>
<div class="abs" style="left:263.9px;top:546.3px;width:1px;height:170px;background:#dfe2e6"></div>
<div class="abs" style="left:348.3px;top:546.3px;width:1px;height:170px;background:#dfe2e6"></div>
<div class="abs" style="left:423px;top:546.3px;width:1px;height:170px;background:#dfe2e6"></div>
<div class="abs" style="left:460px;top:546.3px;width:1px;height:170px;background:#dfe2e6"></div>
<div class="abs" style="left:517.8px;top:546.3px;width:1px;height:170px;background:#dfe2e6"></div>
<div class="abs" style="left:596px;top:546.3px;width:1px;height:170px;background:#dfe2e6"></div>
<div class="abs" style="left:634.4px;top:546.3px;width:1px;height:170px;background:#dfe2e6"></div>
<div class="abs" style="left:722px;top:546.3px;width:1px;height:170px;background:#dfe2e6"></div>
<div class="abs" style="left:793.8px;top:546.3px;width:1px;height:170px;background:#dfe2e6"></div>
<div class="abs" style="left:839.8px;top:546.3px;width:1px;height:170px;background:#dfe2e6"></div>
<div class="abs" style="left:903.7px;top:546.3px;width:1px;height:170px;background:#dfe2e6"></div>
<div class="abs" style="left:991px;top:546.3px;width:1px;height:170px;background:#dfe2e6"></div>
<div class="t" style="left:183.5px;top:573px;font-size:10.4px;color:#212529;letter-spacing:-0.02px;font-weight:bold;">Fav</div>
<div class="t" style="left:221.9px;top:573px;font-size:10.4px;color:#212529;letter-spacing:0.09px;font-weight:bold;">Details</div>
<div class="t" style="left:273.5px;top:573px;font-size:10.4px;color:#212529;letter-spacing:0.05px;font-weight:bold;">Quelle</div>
<div class="t" style="left:357.3px;top:573px;font-size:10.4px;color:#212529;letter-spacing:0.01px;font-weight:bold;">Ort</div>
<div class="t" style="left:432px;top:573px;font-size:10.4px;color:#212529;letter-spacing:-0.35px;font-weight:bold;">Zi</div>
<div class="t" style="left:478.92px;top:573px;font-size:10.4px;color:#212529;letter-spacing:-0.06px;font-weight:bold;">Wfl.</div>
<div class="t" style="left:527.22px;top:573px;font-size:10.4px;color:#212529;letter-spacing:-0.03px;font-weight:bold;">Grundstfl.</div>
<div class="t" style="left:605px;top:573px;font-size:10.4px;color:#212529;letter-spacing:-0.35px;font-weight:bold;">Bj</div>
<div class="t" style="left:677.73px;top:573px;font-size:10.4px;color:#212529;letter-spacing:-0.29px;font-weight:bold;">Preis</div>
<div class="t" style="left:730.77px;top:573px;font-size:10.4px;color:#212529;letter-spacing:0.28px;font-weight:bold;">Preis/m²</div>
<div class="t" style="left:802.5px;top:558px;font-size:10.4px;color:#212529;letter-spacing:-0.35px;font-weight:bold;">ROI</div>
<div class="t" style="left:805.2px;top:573px;font-size:10.4px;color:#212529;letter-spacing:1.14px;font-weight:bold;">(s)</div>
<div class="t" style="left:848.09px;top:558px;font-size:10.4px;color:#212529;letter-spacing:0.76px;font-weight:bold;">Markt-</div>
<div class="t" style="left:850.23px;top:573px;font-size:10.4px;color:#212529;letter-spacing:-0.13px;font-weight:bold;">wert %</div>
<div class="t" style="left:935.99px;top:558px;font-size:10.4px;color:#212529;letter-spacing:0.76px;font-weight:bold;">Markt-</div>
<div class="t" style="left:948.7px;top:573px;font-size:10.4px;color:#212529;letter-spacing:0.31px;font-weight:bold;">wert</div>
<div class="t" style="left:1008.8px;top:558px;font-size:10.4px;color:#212529;letter-spacing:1.02px;font-weight:bold;">Ca</div>
<div class="t" style="left:1020px;top:573px;font-size:10.4px;color:#212529;font-weight:bold;">f</div>
<svg class="abs" style="left:409px;top:573.5px" width="8.5" height="9" viewBox="0 0 8.5 9"><path d="M2.3 8.5 V1 M0.6 2.8 L2.3 0.9 L4 2.8" fill="none" stroke="#d4d4d4" stroke-width=".9"/><path d="M6.2 0.5 V8 M4.5 6.2 L6.2 8.1 L7.9 6.2" fill="none" stroke="#d4d4d4" stroke-width=".9"/></svg>
<svg class="abs" style="left:446.3px;top:573.5px" width="8.5" height="9" viewBox="0 0 8.5 9"><path d="M2.3 8.5 V1 M0.6 2.8 L2.3 0.9 L4 2.8" fill="none" stroke="#d4d4d4" stroke-width=".9"/><path d="M6.2 0.5 V8 M4.5 6.2 L6.2 8.1 L7.9 6.2" fill="none" stroke="#d4d4d4" stroke-width=".9"/></svg>
<svg class="abs" style="left:504.6px;top:573.5px" width="8.5" height="9" viewBox="0 0 8.5 9"><path d="M2.3 8.5 V1 M0.6 2.8 L2.3 0.9 L4 2.8" fill="none" stroke="#d4d4d4" stroke-width=".9"/><path d="M6.2 0.5 V8 M4.5 6.2 L6.2 8.1 L7.9 6.2" fill="none" stroke="#d4d4d4" stroke-width=".9"/></svg>
<svg class="abs" style="left:582.4px;top:573.5px" width="8.5" height="9" viewBox="0 0 8.5 9"><path d="M2.3 8.5 V1 M0.6 2.8 L2.3 0.9 L4 2.8" fill="none" stroke="#d4d4d4" stroke-width=".9"/><path d="M6.2 0.5 V8 M4.5 6.2 L6.2 8.1 L7.9 6.2" fill="none" stroke="#d4d4d4" stroke-width=".9"/></svg>
<svg class="abs" style="left:620.8px;top:573.5px" width="8.5" height="9" viewBox="0 0 8.5 9"><path d="M2.3 8.5 V1 M0.6 2.8 L2.3 0.9 L4 2.8" fill="none" stroke="#d4d4d4" stroke-width=".9"/><path d="M6.2 0.5 V8 M4.5 6.2 L6.2 8.1 L7.9 6.2" fill="none" stroke="#d4d4d4" stroke-width=".9"/></svg>
<svg class="abs" style="left:708.4px;top:573.5px" width="8.5" height="9" viewBox="0 0 8.5 9"><path d="M2.3 8.5 V1 M0.6 2.8 L2.3 0.9 L4 2.8" fill="none" stroke="#d4d4d4" stroke-width=".9"/><path d="M6.2 0.5 V8 M4.5 6.2 L6.2 8.1 L7.9 6.2" fill="none" stroke="#d4d4d4" stroke-width=".9"/></svg>
<svg class="abs" style="left:780px;top:573.5px" width="8.5" height="9" viewBox="0 0 8.5 9"><path d="M2.3 8.5 V1 M0.6 2.8 L2.3 0.9 L4 2.8" fill="none" stroke="#d4d4d4" stroke-width=".9"/><path d="M6.2 0.5 V8 M4.5 6.2 L6.2 8.1 L7.9 6.2" fill="none" stroke="#d4d4d4" stroke-width=".9"/></svg>
<svg class="abs" style="left:825.7px;top:573.5px" width="8.5" height="9" viewBox="0 0 8.5 9"><path d="M2.3 8.5 V1 M0.6 2.8 L2.3 0.9 L4 2.8" fill="none" stroke="#d4d4d4" stroke-width=".9"/><path d="M6.2 0.5 V8 M4.5 6.2 L6.2 8.1 L7.9 6.2" fill="none" stroke="#d4d4d4" stroke-width=".9"/></svg>
<svg class="abs" style="left:889.5px;top:573.5px" width="8.5" height="9" viewBox="0 0 8.5 9"><path d="M2.3 8.5 V1 M0.6 2.8 L2.3 0.9 L4 2.8" fill="none" stroke="#d4d4d4" stroke-width=".9"/><path d="M6.2 0.5 V8 M4.5 6.2 L6.2 8.1 L7.9 6.2" fill="none" stroke="#d4d4d4" stroke-width=".9"/></svg>
<svg class="abs" style="left:977px;top:573.5px" width="8.5" height="9" viewBox="0 0 8.5 9"><path d="M2.3 8.5 V1 M0.6 2.8 L2.3 0.9 L4 2.8" fill="none" stroke="#d4d4d4" stroke-width=".9"/><path d="M6.2 0.5 V8 M4.5 6.2 L6.2 8.1 L7.9 6.2" fill="none" stroke="#d4d4d4" stroke-width=".9"/></svg>
<svg class="abs" style="left:180px;top:604.4px" width="11" height="11" viewBox="0 0 11 11"><path d="M5.5 0.9 L6.9 4 L10.2 4.4 L7.8 6.7 L8.4 10 L5.5 8.4 L2.6 10 L3.2 6.7 L0.8 4.4 L4.1 4 Z" fill="none" stroke="#f4c20d" stroke-width="1.1" stroke-linejoin="round"/></svg>
<svg class="abs" style="left:196.2px;top:604.4px" width="9" height="11" viewBox="0 0 9 11"><path d="M0.5 2.2 H8.5 M3 2 V0.8 H6 V2" fill="none" stroke="#bf2a3c" stroke-width="1.1"/><path d="M1.3 3 H7.7 L7.3 10.3 H1.7 Z" fill="none" stroke="#bf2a3c" stroke-width="1.1"/><path d="M3.3 4.5 V8.8 M5.7 4.5 V8.8" stroke="#bf2a3c" stroke-width=".8"/></svg>
<div class="t" style="left:221.9px;top:605px;font-size:10.1px;color:#3f93d8;letter-spacing:0.26px;">Details</div>
<div class="t" style="left:273.5px;top:605px;font-size:10.1px;color:#3f93d8;letter-spacing:0.56px;">ImmoScout</div>
<div class="t" style="left:357.3px;top:605px;font-size:10.1px;color:#4a4a4a;letter-spacing:-0.35px;">Sülz</div>
<div class="t" style="left:432px;top:605px;font-size:10.1px;color:#4a4a4a;letter-spacing:0.83px;">40</div>
<div class="t" style="left:476.18px;top:605px;font-size:10.1px;color:#4a4a4a;letter-spacing:0.48px;">689 m²</div>
<div class="t" style="left:554.96px;top:605px;font-size:10.1px;color:#4a4a4a;letter-spacing:0.38px;">354 m²</div>
<div class="t" style="left:643.67px;top:605px;font-size:10.1px;color:#4a4a4a;letter-spacing:0.2px;">2.500.000,00 €</div>
<div class="t" style="left:735.84px;top:605px;font-size:10.1px;color:#4a4a4a;letter-spacing:0.21px;">3.628,45 €</div>
<div class="t" style="left:810.65px;top:605px;font-size:10.1px;color:#4a4a4a;letter-spacing:-0.35px;">5,1 %</div>
<div class="t" style="left:877.17px;top:605px;font-size:10.1px;color:#4a4a4a;letter-spacing:0.13px;">-3%</div>
<div class="t" style="left:912.94px;top:605px;font-size:10.1px;color:#4a4a4a;letter-spacing:0.2px;">2.580.000,00 €</div>
<div class="t" style="left:1004.7px;top:605px;font-size:10.1px;color:#4a4a4a;letter-spacing:-0.35px;">1.494</div>
<svg class="abs" style="left:866.5px;top:606.9px" width="8" height="6" viewBox="0 0 8 6"><path d="M0.8 1 L4 4.2 L7.2 1" fill="none" stroke="#2aa02a" stroke-width="1.3"/></svg>
<svg class="abs" style="left:180px;top:635.4px" width="11" height="11" viewBox="0 0 11 11"><path d="M5.5 0.9 L6.9 4 L10.2 4.4 L7.8 6.7 L8.4 10 L5.5 8.4 L2.6 10 L3.2 6.7 L0.8 4.4 L4.1 4 Z" fill="none" stroke="#f4c20d" stroke-width="1.1" stroke-linejoin="round"/></svg>
<svg class="abs" style="left:196.2px;top:635.4px" width="9" height="11" viewBox="0 0 9 11"><path d="M0.5 2.2 H8.5 M3 2 V0.8 H6 V2" fill="none" stroke="#bf2a3c" stroke-width="1.1"/><path d="M1.3 3 H7.7 L7.3 10.3 H1.7 Z" fill="none" stroke="#bf2a3c" stroke-width="1.1"/><path d="M3.3 4.5 V8.8 M5.7 4.5 V8.8" stroke="#bf2a3c" stroke-width=".8"/></svg>
<div class="t" style="left:221.9px;top:636px;font-size:10.1px;color:#3f93d8;letter-spacing:0.26px;">Details</div>
<div class="t" style="left:273.5px;top:636px;font-size:10.1px;color:#3f93d8;letter-spacing:0.56px;">ImmoScout</div>
<div class="t" style="left:357.3px;top:636px;font-size:10.1px;color:#4a4a4a;letter-spacing:0.67px;">Neustadt-</div>
<div class="t" style="left:357.3px;top:651px;font-size:10.1px;color:#4a4a4a;letter-spacing:0.15px;">Süd</div>
<div class="t" style="left:471.14px;top:636px;font-size:10.1px;color:#4a4a4a;letter-spacing:-0.14px;">1.060 m²</div>
<div class="t" style="left:554.97px;top:636px;font-size:10.1px;color:#4a4a4a;letter-spacing:0.38px;">300 m²</div>
<div class="t" style="left:605px;top:636px;font-size:10.1px;color:#4a4a4a;letter-spacing:-0.35px;">1900</div>
<div class="t" style="left:643.47px;top:636px;font-size:10.1px;color:#4a4a4a;letter-spacing:0.22px;">3.650.000,00 €</div>
<div class="t" style="left:735.78px;top:636px;font-size:10.1px;color:#4a4a4a;letter-spacing:0.22px;">3.443,40 €</div>
<div class="t" style="left:807.66px;top:636px;font-size:10.1px;color:#4a4a4a;letter-spacing:-0.35px;">5,8 %</div>
<div class="t" style="left:871.14px;top:636px;font-size:10.1px;color:#4a4a4a;letter-spacing:0.23px;">-30%</div>
<div class="t" style="left:977.71px;top:636px;font-size:10.1px;color:#4a4a4a;">-</div>
<div class="t" style="left:1002.3px;top:636px;font-size:10.1px;color:#4a4a4a;letter-spacing:0.16px;">3.664</div>
<svg class="abs" style="left:860.5px;top:636.4px" width="8" height="9" viewBox="0 0 8 9"><path d="M0.8 1 L4 4 L7.2 1 M0.8 4.8 L4 7.8 L7.2 4.8" fill="none" stroke="#2aa02a" stroke-width="1.3"/></svg>
<svg class="abs" style="left:180px;top:681.2px" width="11" height="11" viewBox="0 0 11 11"><path d="M5.5 0.9 L6.9 4 L10.2 4.4 L7.8 6.7 L8.4 10 L5.5 8.4 L2.6 10 L3.2 6.7 L0.8 4.4 L4.1 4 Z" fill="none" stroke="#f4c20d" stroke-width="1.1" stroke-linejoin="round"/></svg>
<svg class="abs" style="left:196.2px;top:681.2px" width="9" height="11" viewBox="0 0 9 11"><path d="M0.5 2.2 H8.5 M3 2 V0.8 H6 V2" fill="none" stroke="#bf2a3c" stroke-width="1.1"/><path d="M1.3 3 H7.7 L7.3 10.3 H1.7 Z" fill="none" stroke="#bf2a3c" stroke-width="1.1"/><path d="M3.3 4.5 V8.8 M5.7 4.5 V8.8" stroke="#bf2a3c" stroke-width=".8"/></svg>
<div class="t" style="left:221.9px;top:682px;font-size:10.1px;color:#3f93d8;letter-spacing:0.26px;">Details</div>
<div class="t" style="left:273.5px;top:682px;font-size:10.1px;color:#3f93d8;letter-spacing:0.56px;">ImmoScout</div>
<div class="t" style="left:357.3px;top:682px;font-size:10.1px;color:#4a4a4a;letter-spacing:0.06px;">Köln</div>
<div class="t" style="left:469.92px;top:682px;font-size:10.1px;color:#4a4a4a;letter-spacing:0.03px;">3.720 m²</div>
<div class="t" style="left:643.92px;top:682px;font-size:10.1px;color:#4a4a4a;letter-spacing:0.18px;">7.800.000,00 €</div>
<div class="t" style="left:737.06px;top:682px;font-size:10.1px;color:#4a4a4a;letter-spacing:0.08px;">2.096,77 €</div>
<div class="t" style="left:807.63px;top:682px;font-size:10.1px;color:#4a4a4a;letter-spacing:-0.35px;">8,8 %</div>
<div class="t" style="left:871.13px;top:682px;font-size:10.1px;color:#4a4a4a;letter-spacing:0.23px;">-43%</div>
<div class="t" style="left:977.71px;top:682px;font-size:10.1px;color:#4a4a4a;">-</div>
<div class="t" style="left:999.4px;top:682px;font-size:10.1px;color:#4a4a4a;letter-spacing:-0.35px;">26.811</div>
<svg class="abs" style="left:860.5px;top:682.2px" width="8" height="9" viewBox="0 0 8 9"><path d="M0.8 1 L4 4 L7.2 1 M0.8 4.8 L4 7.8 L7.2 4.8" fill="none" stroke="#2aa02a" stroke-width="1.3"/></svg>
<div class="abs" style="left:1010px;top:32px;width:14px;height:675px;background:linear-gradient(90deg,rgba(0,0,0,0),rgba(0,0,0,.1));pointer-events:none"></div>
</div>
<svg class="abs" style="left:110px;top:135px;z-index:20" width="16" height="42" viewBox="110 135 16 42"><path d="M117.5 138 L118.4 162" stroke="#fe0000" stroke-width="2"/><path d="M113 160.5 H124 L118.7 175.8 Z" fill="#fe0000"/></svg>
<div class="ann" style="left:135.9px;top:178.9px">1</div>
<div class="ann" style="left:299.5px;top:109px">2</div>
<div class="ann" style="left:511.5px;top:111.7px">3</div>
<div class="ann" style="left:785.9px;top:61.4px">4</div>
<div class="ann" style="left:295px;top:32.5px">5</div>
<div class="ann" style="left:950.5px;top:442.5px">6</div>
</body>
</html>
